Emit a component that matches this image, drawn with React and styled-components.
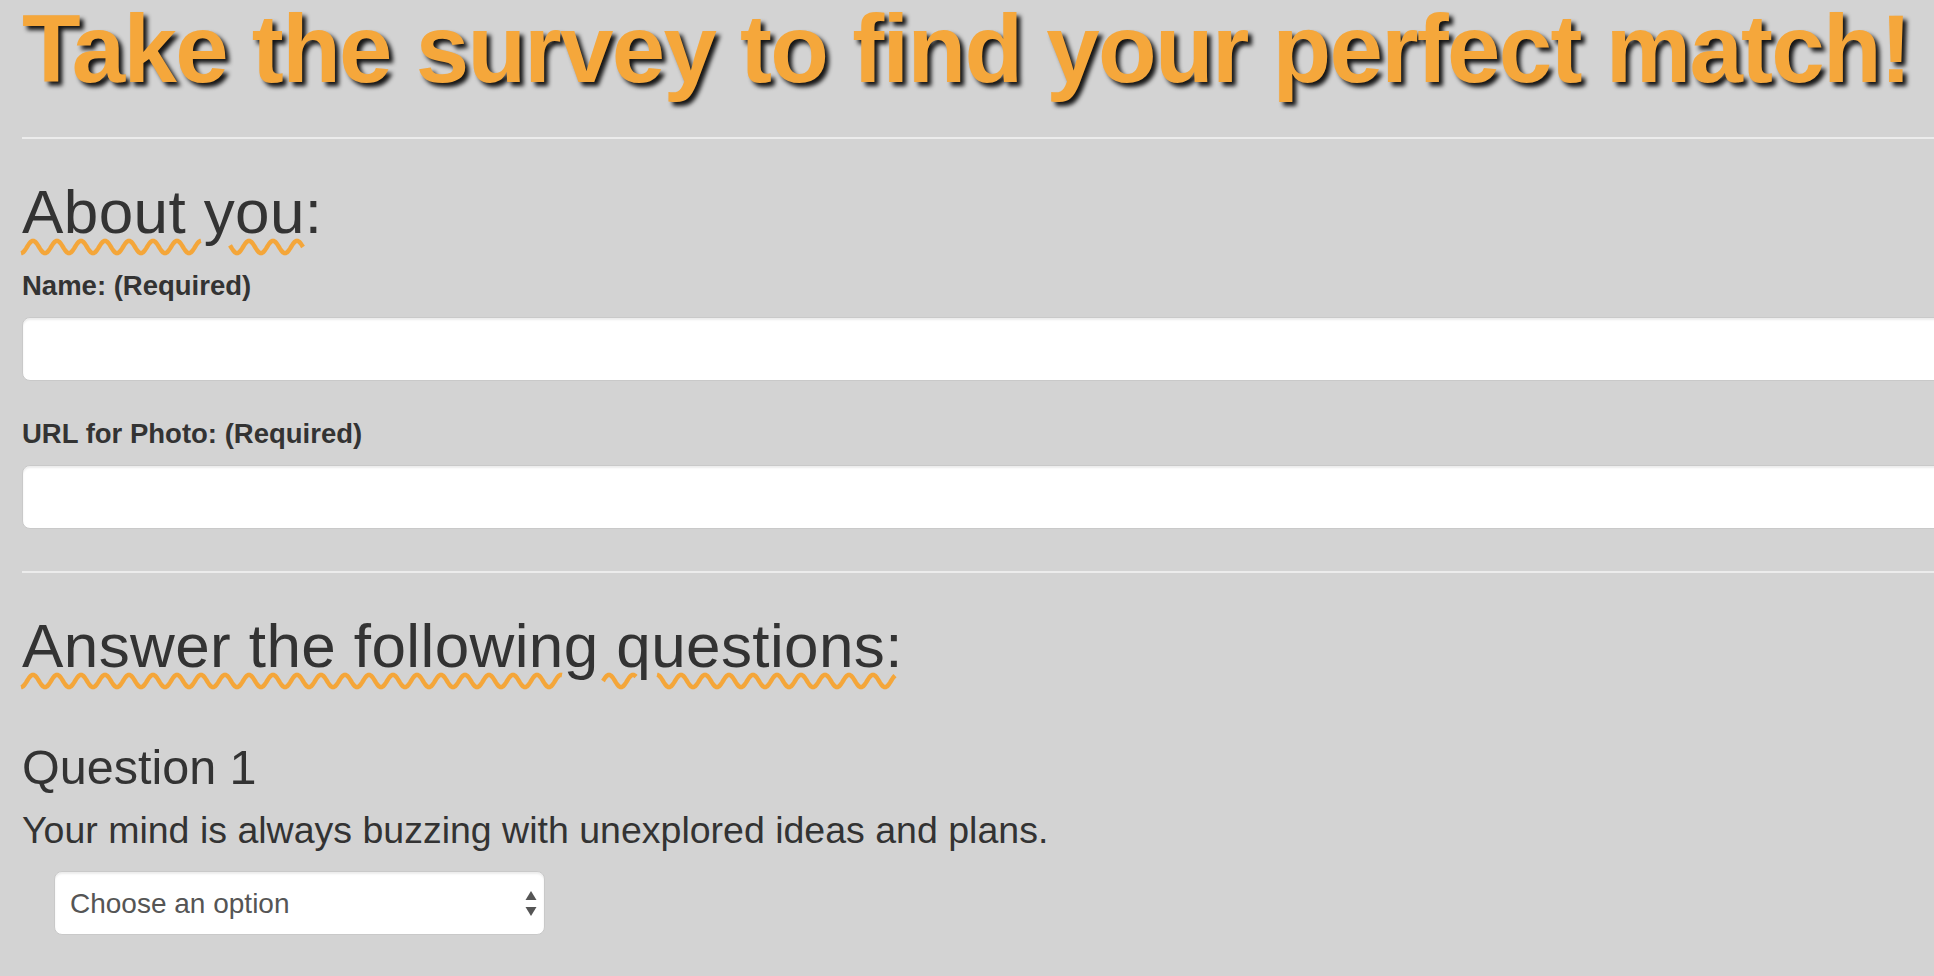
import styled, { createGlobalStyle } from "styled-components";

const GlobalStyle = createGlobalStyle`
  html, body {
    margin: 0;
    padding: 0;
    background: #d3d3d3;
    overflow: hidden;
  }
  body {
    font-family: "Liberation Sans", Arial, Helvetica, sans-serif;
    color: #333;
  }
  * {
    box-sizing: border-box;
  }
`;

// squiggly spell-check style line, with gaps where descenders cross it
const WAVE = 24;
const AMP = 6.2;

function wavePath([from, to]) {
  const pts = [];
  for (let x = from; x <= to; x += 1) {
    const y = 10 + AMP * Math.cos((2 * Math.PI * (x + 1)) / WAVE);
    pts.push(`${x},${y.toFixed(2)}`);
  }
  return "M" + pts.join(" L");
}

function Marked({ children, segments }) {
  return (
    <MarkedText>
      {children}
      <Squiggle aria-hidden="true">
        {segments.map((s) => (
          <path key={s[0]} d={wavePath(s)} />
        ))}
      </Squiggle>
    </MarkedText>
  );
}

export default function App() {
  return (
    <>
      <GlobalStyle />
      <Page>
        <Title>Take the survey to find your perfect match!</Title>
        <Rule $gap={40} />
        <form>
          <SectionTitle>
            <Marked segments={[[-1, 179], [208, 281]]}>About you</Marked>:
          </SectionTitle>
          <Field>
            <Label htmlFor="name">Name: (Required)</Label>
            <TextInput id="name" type="text" />
          </Field>
          <Field>
            <Label htmlFor="photo">URL for Photo: (Required)</Label>
            <TextInput id="photo" type="text" />
          </Field>
          <Rule $gap={42} />
          <SectionTitle>
            <Marked segments={[[-1, 540], [581, 614], [635, 873]]}>
              Answer the following questions
            </Marked>
            :
          </SectionTitle>
          <Question>
            <QuestionTitle>Question 1</QuestionTitle>
            <Prompt>Your mind is always buzzing with unexplored ideas and plans.</Prompt>
            <SelectWrap>
              <Select defaultValue="">
                <option value="" disabled>
                  Choose an option
                </option>
                <option value="1">1 (Strongly Disagree)</option>
                <option value="2">2</option>
                <option value="3">3</option>
                <option value="4">4</option>
                <option value="5">5 (Strongly Agree)</option>
              </Select>
              <Arrows viewBox="0 0 12 26" aria-hidden="true">
                <path d="M6 0 L11.5 9 L0.5 9 Z" />
                <path d="M0.5 16 L11.5 16 L6 25 Z" />
              </Arrows>
            </SelectWrap>
          </Question>
        </form>
      </Page>
    </>
  );
}

const Page = styled.main`
  padding: 1px 0 0 22px;
  margin-right: -40px;
`;

const Title = styled.h1`
  margin: 0;
  font-size: 96px;
  line-height: 96px;
  font-weight: bold;
  letter-spacing: -1.7px;
  white-space: nowrap;
  color: #f5a73b;
  text-shadow: 4px 4px 4px rgba(0, 0, 0, 0.9);
`;

const Rule = styled.hr`
  margin: ${(p) => p.$gap}px 0 0;
  border: 0;
  border-top: 2px solid #ececec;
`;

const SectionTitle = styled.h2`
  margin: 41.5px 0 0;
  font-size: 62px;
  line-height: 62px;
  font-weight: normal;
  letter-spacing: 0.4px;
  color: #333;
`;

const MarkedText = styled.span`
  position: relative;
  display: inline-block;
`;

const Squiggle = styled.svg`
  position: absolute;
  left: 0;
  top: 56px;
  width: 100%;
  height: 20px;
  overflow: visible;
  pointer-events: none;
  fill: none;
  stroke: #f4a63a;
  stroke-width: 4.4;
  stroke-linejoin: round;
`;

const Field = styled.div`
  display: flex;
  flex-direction: column;
  margin-top: 29px;

  & + & {
    margin-top: 38.5px;
  }
`;

const Label = styled.label`
  font-size: 27.5px;
  line-height: 28px;
  font-weight: bold;
  color: #333;
`;

const TextInput = styled.input`
  margin-top: 17.5px;
  height: 64px;
  width: 100%;
  padding: 0 24px;
  font: inherit;
  font-size: 28px;
  color: #555;
  background: #fff;
  border: 1px solid #c9c9c9;
  border-radius: 8px;
  box-shadow: inset 0 2px 2px rgba(0, 0, 0, 0.075);
  outline: none;
`;

const Question = styled.section`
  margin-top: 66px;
`;

const QuestionTitle = styled.h3`
  margin: 0;
  font-size: 48.5px;
  line-height: 48px;
  font-weight: normal;
  color: #333;
`;

const Prompt = styled.p`
  margin: 19.5px 0 0;
  font-size: 37.5px;
  line-height: 40px;
  color: #333;
`;

const SelectWrap = styled.div`
  position: relative;
  margin: 21px 0 0 32px;
  width: 491px;
`;

const Select = styled.select`
  appearance: none;
  display: block;
  width: 100%;
  height: 64px;
  padding: 0 40px 0 15px;
  font-family: "Liberation Sans", Arial, Helvetica, sans-serif;
  font-size: 28px;
  color: #555;
  background: #fff;
  border: 1px solid #c9c9c9;
  border-radius: 8px;
  box-shadow: inset 0 2px 2px rgba(0, 0, 0, 0.075);
  outline: none;
`;

const Arrows = styled.svg`
  position: absolute;
  right: 8px;
  top: 20px;
  width: 12px;
  height: 26px;
  fill: #555;
  pointer-events: none;
`;
